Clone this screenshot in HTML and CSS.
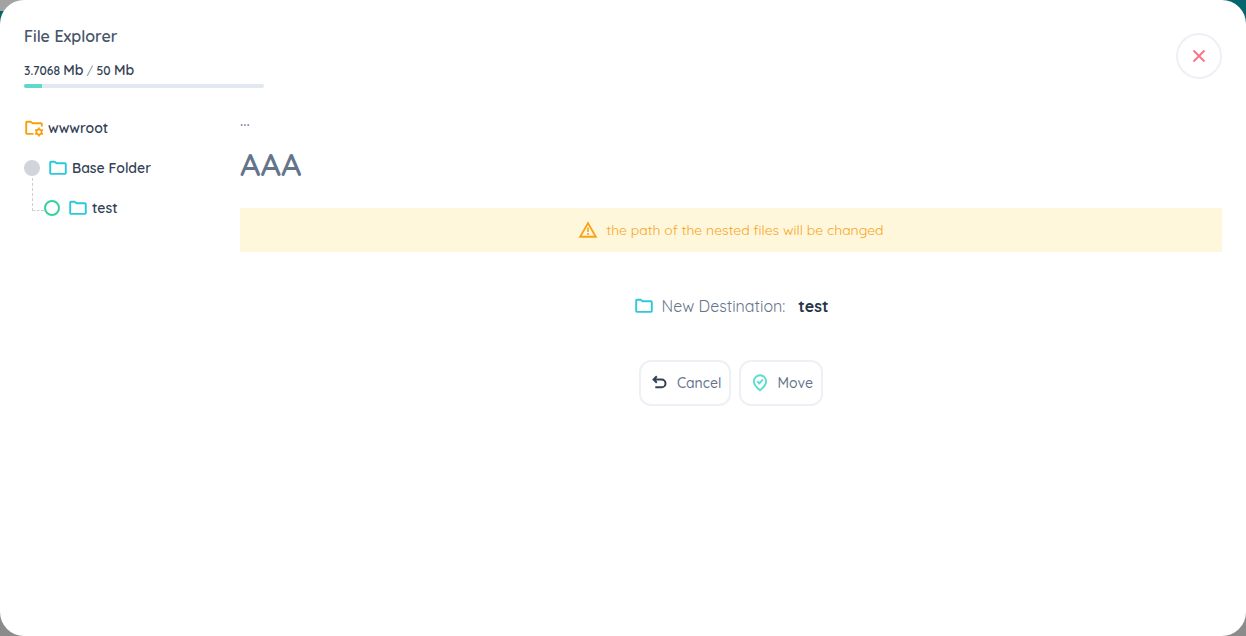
FILE: index.html
```
<!DOCTYPE html>
<html lang="en">
<head>
<meta charset="utf-8">
<meta name="viewport" content="width=device-width, initial-scale=1">
<title>File Explorer</title>
<link rel="stylesheet" href="styles.css">
</head>
<body>
<svg class="sprite" aria-hidden="true">
  <symbol id="folder" viewBox="0 0 20 20">
    <path d="M3 3.700h3.600l2 1.600H17q.8 0 .8.800v9q0 .8-.8.800H3q-.8 0-.8-.8V4.500q0-.8.8-.8z" fill="none" stroke="currentColor" stroke-width="1.900" stroke-linejoin="round"/>
  </symbol>
</svg>
<div class="dialog" role="dialog" aria-labelledby="title">
  <header class="header">
    <div class="summary">
      <h1 class="title" id="title">File Explorer</h1>
      <p class="usage">3.7068 <span class="unit">Mb</span> <span class="slash">/</span> 50 <span class="unit">Mb</span></p>
      <div class="track"><div class="fill" style="width: 7.4%"></div></div>
    </div>
    <button class="close" type="button" aria-label="Close">
      <svg width="14" height="14" viewBox="0 0 14 14"><path d="M1.500 1.500l11 11M12.500 1.500l-11 11" stroke="currentColor" stroke-width="1.800"/></svg>
    </button>
  </header>
  <div class="body">
    <nav class="tree" aria-label="Folders">
      <a class="node root" href="#">
        <svg class="icon" width="20" height="20" viewBox="0 0 20 20" fill="none" stroke="currentColor">
          <path d="M9.500 15.900H3q-.8 0-.8-.8V4.500q0-.8.8-.8h3.600l2 1.600H17q.8 0 .8.800v2.400" stroke-width="1.900" stroke-linejoin="round"/>
          <circle cx="15" cy="14" r="2.600" stroke-width="1.700"/>
          <path d="M15 9.500v1.900M15 16.600v1.900M11.100 11.750l1.650.95M17.250 15.300l1.650.95M18.900 11.750l-1.650.95M12.750 15.300l-1.650.95" stroke-width="1.700"/>
        </svg>
        <span>wwwroot</span>
      </a>
      <a class="node" href="#"><span class="dot"></span><svg class="icon folder" width="20" height="20"><use href="#folder"/></svg><span>Base Folder</span></a>
      <div class="branch">
        <span class="elbow"></span>
        <a class="node" href="#"><span class="dot open"></span><svg class="icon folder" width="20" height="20"><use href="#folder"/></svg><span>test</span></a>
      </div>
    </nav>
    <main class="main">
      <p class="crumb">...</p>
      <h2 class="name">AAA</h2>
      <p class="warning" role="alert">
        <svg width="20" height="20" viewBox="0 0 20 20" fill="none" stroke="currentColor" stroke-width="1.900"><path d="M10 3.100L2.200 16.800h15.600z"/><path d="M10 7.600v4.500M10 13.100v1.800" stroke-width="1.600"/></svg>
        <span>the path of the nested files will be changed</span>
      </p>
      <p class="destination"><svg class="folder" width="20" height="20"><use href="#folder"/></svg><span>New Destination:</span><strong>test</strong></p>
      <div class="actions">
        <button class="action" type="button">
          <svg class="undo" width="18" height="18" viewBox="0 0 18 18" fill="none" stroke="currentColor" stroke-width="2"><path d="M5.800 2.300L2.600 5.500l3.200 3.200M2.600 5.500h8a3.900 3.900 0 0 1 0 7.800H4.300"/></svg>
          <span>Cancel</span>
        </button>
        <button class="action" type="button">
          <svg class="pin" width="18" height="18" viewBox="0 0 18 18" fill="none" stroke="currentColor" stroke-width="1.900"><path d="M9 16.300C6.300 14.100 2.900 11 2.900 7.400a6.100 6.100 0 0 1 12.200 0C15.100 11 11.700 14.100 9 16.300z"/><path d="M6.200 7.300l2.100 2 3.700-3.900"/></svg>
          <span>Move</span>
        </button>
      </div>
    </main>
  </div>
</div>
</body>
</html>
```
FILE: styles.css
```
* { box-sizing: border-box; }
body {
  margin: 0;
  font-family: Quicksand, Lato, sans-serif;
  font-size: 14px;
  font-weight: 500;
  line-height: 20px;
  color: #334155;
  background: linear-gradient(90deg, #a3a3a3 50%, transparent 50%) top / 100% 11px no-repeat,
    linear-gradient(#05656d 50%, #8b8b8b 50%);
}
h1, h2, p { margin: 0; }
a { color: inherit; text-decoration: none; }
button { font: inherit; background: #fff; cursor: pointer; }
svg { display: block; flex: none; }
.sprite { position: absolute; width: 0; height: 0; }
.dialog {
  min-height: 100vh;
  padding: 24px;
  border-radius: 24px;
  background: #fff;
}
.header { display: flex; justify-content: space-between; align-items: center; }
.summary { width: 240px; }
.title { font-size: 16px; line-height: 24px; font-weight: 600; color: #475569; }
.usage { height: 20px; margin-top: 12px; font-size: 12px; font-weight: 600; }
.unit { font-size: 14px; }
.slash { font-weight: 400; color: #64748b; }
.track { height: 4px; margin-top: 4px; border-radius: 2px; background: #e2e8f0; overflow: hidden; }
.fill { height: 100%; background: #5ed9cd; }
.close {
  display: grid;
  place-items: center;
  width: 46px;
  height: 46px;
  padding: 0;
  border: 2px solid #edf0f5;
  border-radius: 50%;
  color: #fb7185;
}
.body { display: grid; grid-template-columns: 216px 1fr; margin-top: 20px; }
.tree { padding-top: 10px; font-weight: 600; }
.node { display: flex; align-items: center; height: 20px; margin-bottom: 20px; }
.root .icon { color: #f99f0b; }
.icon { margin-right: 4px; }
.folder { color: #2bc9dc; }
.dot { width: 16px; height: 16px; margin-right: 8px; border-radius: 50%; background: #d1d5db; }
.open { background: #fff; border: 2px solid #34d399; }
.branch { position: relative; padding-left: 20px; }
.elbow {
  position: absolute;
  left: 8px;
  top: -20px;
  width: 12px;
  height: 33px;
  border-left: 1px dashed #cfcfcf;
  border-bottom: 1px dashed #cfcfcf;
}
.crumb { height: 20px; margin-top: 2px; font-size: 18px; font-weight: 400; color: #64748b; }
.name { margin-top: 14px; font-size: 32px; line-height: 40px; font-weight: 600; color: #64748b; }
.warning {
  display: flex;
  align-items: center;
  justify-content: center;
  gap: 8px;
  margin-top: 24px;
  padding: 12px;
  background: #fef7dc;
  font-weight: 400;
  color: #f9a31c;
}
.destination {
  display: flex;
  align-items: center;
  justify-content: center;
  gap: 8px;
  margin-top: 42px;
  font-size: 16px;
  line-height: 24px;
  font-weight: 400;
  color: #64748b;
}
.destination strong { margin-left: 5px; color: #273449; }
.actions { display: flex; justify-content: center; gap: 8px; margin-top: 42px; }
.action {
  display: flex;
  align-items: center;
  gap: 8px;
  height: 46px;
  padding: 0 8px 0 10px;
  border: 2px solid #edf0f5;
  border-radius: 12px;
  color: #64748b;
}
.undo { color: #334155; }
.pin { color: #5edcd0; }
```
